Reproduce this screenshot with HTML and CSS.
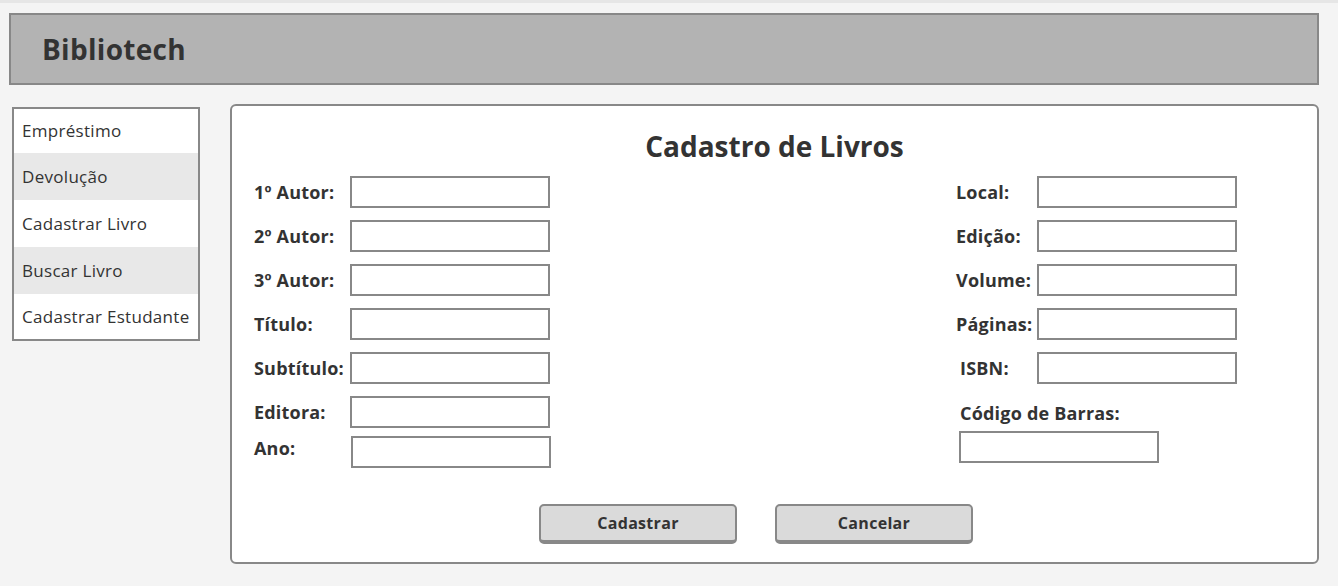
FILE: index.html
```html
<!DOCTYPE html>
<html lang="pt">
<head>
<meta charset="utf-8">
<title>Bibliotech</title>
<link rel="stylesheet" href="styles.css">
</head>
<body>
<div class="topline"></div>
<header class="header"><h1 class="brand">Bibliotech</h1></header>
<div class="layout">
  <nav class="sidebar">
    <a class="nav-item">Empréstimo</a>
    <a class="nav-item alt">Devolução</a>
    <a class="nav-item">Cadastrar Livro</a>
    <a class="nav-item alt">Buscar Livro</a>
    <a class="nav-item">Cadastrar Estudante</a>
  </nav>
  <main class="panel">
    <h2 class="title">Cadastro de Livros</h2>
    <div class="form">
      <div class="col-left">
        <label class="lbl">1º Autor:</label><input class="field" type="text">
        <label class="lbl">2º Autor:</label><input class="field" type="text">
        <label class="lbl">3º Autor:</label><input class="field" type="text">
        <label class="lbl">Título:</label><input class="field" type="text">
        <label class="lbl">Subtítulo:</label><input class="field" type="text">
        <label class="lbl">Editora:</label><input class="field" type="text">
        <label class="lbl lbl-top">Ano:</label><input class="field field-ano" type="text">
      </div>
      <div class="col-right">
        <div class="grid-right">
          <label class="lbl">Local:</label><input class="field" type="text">
          <label class="lbl">Edição:</label><input class="field" type="text">
          <label class="lbl">Volume:</label><input class="field" type="text">
          <label class="lbl">Páginas:</label><input class="field" type="text">
          <label class="lbl indent">ISBN:</label><input class="field" type="text">
        </div>
        <label class="lbl barcode-lbl">Código de Barras:</label>
        <input class="field barcode" type="text">
      </div>
    </div>
    <div class="actions">
      <button class="btn" type="button">Cadastrar</button>
      <button class="btn" type="button">Cancelar</button>
    </div>
  </main>
</div>
</body>
</html>
```
FILE: styles.css
```css
* { box-sizing: border-box; }
html, body { margin: 0; padding: 0; }
body {
  background: #f4f4f4;
  font-family: "Open Sans", "Noto Sans", sans-serif;
  color: #333;
  width: 1338px;
  height: 586px;
  overflow: hidden;
}
.topline { height: 3px; background: #e6e6e6; }
.header {
  margin: 10px 19px 0 9px;
  height: 72px;
  background: #b3b3b3;
  border: 2px solid #888;
  display: flex;
  align-items: center;
  padding-left: 31px;
}
.brand {
  margin: 0;
  font-size: 28px;
  font-weight: 700;
  color: #333;
  letter-spacing: 0.3px;
}
.layout {
  display: flex;
  align-items: flex-start;
  padding: 19px 19px 0 12px;
}
.sidebar {
  width: 188px;
  border: 2px solid #888;
  background: #fff;
  margin-top: 3px;
  display: flex;
  flex-direction: column;
}
.nav-item {
  height: 47px;
  display: flex;
  align-items: center;
  padding-left: 8px;
  font-size: 17px;
  letter-spacing: 0.3px;
  color: #333;
  white-space: nowrap;
  background: #fff;
}
.nav-item:first-child { height: 44px; padding-bottom: 2px; }
.nav-item:last-child { height: 45px; }
.nav-item.alt { background: #e8e8e8; }
.panel {
  margin-left: 30px;
  width: 1089px;
  height: 460px;
  background: #fff;
  border: 2px solid #888;
  border-radius: 6px;
  padding: 0 22px;
}
.title {
  margin: 24px 0 0;
  text-align: center;
  font-size: 28px;
  font-weight: 700;
  line-height: 32px;
  color: #333;
}
.form {
  display: flex;
  justify-content: space-between;
  margin-top: 14px;
  padding-right: 58px;
}
.col-left {
  display: grid;
  grid-template-columns: 96px 200px;
  row-gap: 12px;
  align-items: center;
}
.lbl {
  font-size: 18px;
  font-weight: 700;
  letter-spacing: 0.2px;
  color: #333;
  white-space: nowrap;
}
.field {
  width: 200px;
  height: 32px;
  border: 2px solid #888;
  background: #fff;
  margin: 0;
  padding: 0 6px;
  font: inherit;
}
.col-left .lbl-top { align-self: start; margin-top: -4px; }
.col-left .field-ano { margin-top: -4px; margin-left: 1px; }
.col-right {
  display: flex;
  flex-direction: column;
  align-items: flex-start;
  width: 281px;
}
.grid-right {
  display: grid;
  grid-template-columns: 81px 200px;
  row-gap: 12px;
  align-items: center;
}
.indent { padding-left: 4px; }
.barcode-lbl { margin: 16px 0 0 4px; line-height: 26px; }
.barcode { margin: 5px 0 0 3px; }
.actions {
  display: flex;
  gap: 38px;
  padding-left: 285px;
  margin-top: 36px;
}
.btn {
  width: 198px;
  height: 40px;
  background: #dadada;
  border: 2px solid #888;
  border-bottom-width: 4px;
  border-radius: 5px;
  font-family: inherit;
  font-size: 16px;
  letter-spacing: 0.3px;
  font-weight: 700;
  color: #333;
  padding: 0;
}
```
